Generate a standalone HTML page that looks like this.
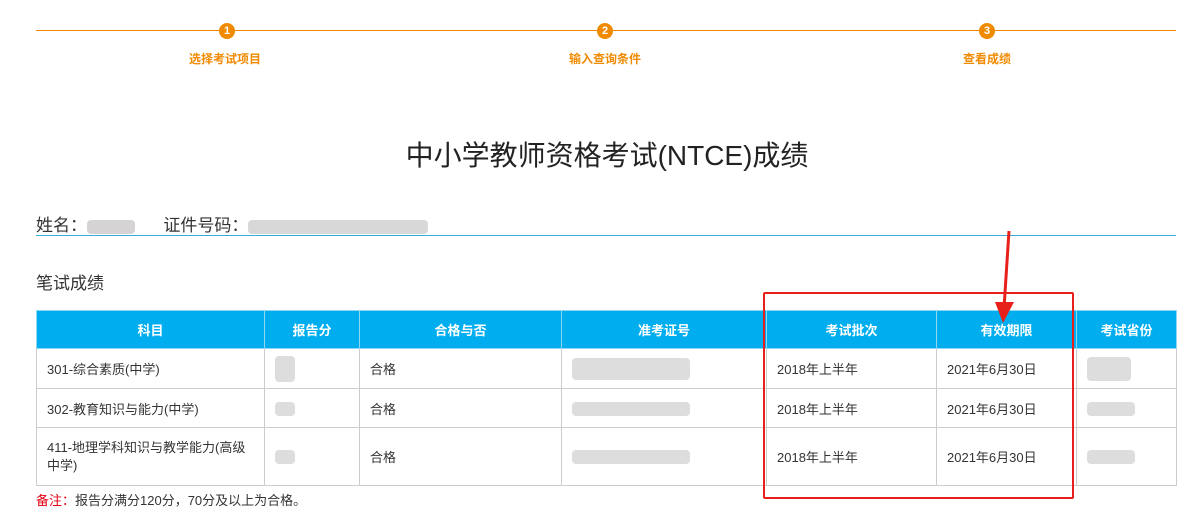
<!DOCTYPE html>
<html><head><meta charset="utf-8"><style>
body{margin:0;width:1200px;height:526px;background:#fff;font-family:"Liberation Sans","Noto Sans CJK SC",sans-serif;position:relative;overflow:hidden;color:#333}
.a{position:absolute}
.step{position:absolute;top:23px;width:16px;height:16px;border-radius:50%;background:#f08a00;color:#fff;font-size:11px;font-weight:bold;text-align:center;line-height:16px}
.lbl{position:absolute;top:50px;font-size:12px;color:#f08a00;font-weight:bold;transform:translateX(-50%);white-space:nowrap}
table{position:absolute;left:36px;top:310px;border-collapse:collapse;font-size:13px}
td,th{border:1px solid #ccc;padding:0 10px;text-align:left;color:#333}
th{background:#00aeef;color:#fff;text-align:center;height:37px;border-color:#8fd6f5;font-size:13px}
.blur{display:inline-block;height:14px;background:#ddd;border-radius:4px;vertical-align:middle}
</style></head><body>
<div class="a" style="left:36px;top:30px;width:1140px;height:1px;background:#f08a00"></div>
<div class="step" style="left:219px">1</div>
<div class="step" style="left:597px">2</div>
<div class="step" style="left:979px">3</div>
<div class="lbl" style="left:225px">选择考试项目</div>
<div class="lbl" style="left:605px">输入查询条件</div>
<div class="lbl" style="left:987px">查看成绩</div>
<div class="a" style="left:0;width:1214px;top:134px;text-align:center;font-size:28px;color:#222">中小学教师资格考试(NTCE)成绩</div>
<div class="a" style="left:36px;top:211px;font-size:17px;color:#333">姓名：<span class="blur" style="width:48px;background:#d5d3d3"></span>&nbsp;&nbsp;&nbsp;&nbsp;&nbsp;&nbsp;证件号码：<span class="blur" style="width:180px;background:#d8d8d8"></span></div>
<div class="a" style="left:36px;top:235px;width:1140px;height:1px;background:#39a9d8"></div>
<div class="a" style="left:36px;top:269px;font-size:17px;color:#333">笔试成绩</div>
<table>
<tr><th style="width:207px">科目</th><th style="width:74px">报告分</th><th style="width:181px">合格与否</th><th style="width:184px">准考证号</th><th style="width:149px">考试批次</th><th style="width:119px">有效期限</th><th style="width:79px">考试省份</th></tr>
<tr style="height:40px"><td>301-综合素质(中学)</td><td><span class="blur" style="width:20px;height:26px"></span></td><td>合格</td><td><span class="blur" style="width:118px;height:22px"></span></td><td>2018年上半年</td><td>2021年6月30日</td><td><span class="blur" style="width:44px;height:24px"></span></td></tr>
<tr style="height:39px"><td>302-教育知识与能力(中学)</td><td><span class="blur" style="width:20px"></span></td><td>合格</td><td><span class="blur" style="width:118px"></span></td><td>2018年上半年</td><td>2021年6月30日</td><td><span class="blur" style="width:48px"></span></td></tr>
<tr style="height:58px"><td style="line-height:18px">411-地理学科知识与教学能力(高级中学)</td><td><span class="blur" style="width:20px"></span></td><td>合格</td><td><span class="blur" style="width:118px"></span></td><td>2018年上半年</td><td>2021年6月30日</td><td><span class="blur" style="width:48px"></span></td></tr>
</table>
<div class="a" style="left:36px;top:490px;font-size:13px"><span style="color:#e60012">备注：</span>报告分满分120分，70分及以上为合格。</div>
<div class="a" style="left:763px;top:292px;width:307px;height:203px;border:2px solid #e8201c;border-radius:2px"></div>
<svg class="a" style="left:990px;top:228px" width="30" height="100"><line x1="19" y1="3" x2="14" y2="80" stroke="#e8201c" stroke-width="3"/><polygon points="5,74 24,74 13,95" fill="#e8201c"/></svg>
</body></html>
